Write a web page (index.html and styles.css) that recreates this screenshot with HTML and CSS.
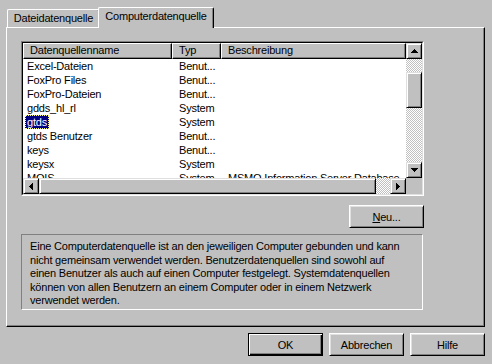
FILE: index.html
```html
<!DOCTYPE html>
<html lang="de">

<head>
  <meta charset="UTF-8">
  <meta name="viewport" content="width=device-width, initial-scale=1.0">
  <title>ODBC-Datenquellen</title>
  <link rel="stylesheet" href="styles.css">
</head>

<body>
  <div class="dialog">
    <div class="tabs">
      <div class="tab">Dateidatenquelle</div>
      <div class="tab tab-active">Computerdatenquelle</div>
    </div>

    <div class="panel">
      <div class="listview">
        <div class="listview-frame">
          <div class="list-body">
            <div class="list-header">
              <div class="col-head">Datenquellenname</div>
              <div class="col-head">Typ</div>
              <div class="col-head">Beschreibung</div>
            </div>
            <div class="row"><span class="name"><span class="label">Excel-Dateien</span></span><span class="typ">Benut...</span><span class="desc"></span></div>
            <div class="row"><span class="name"><span class="label">FoxPro Files</span></span><span class="typ">Benut...</span><span class="desc"></span></div>
            <div class="row"><span class="name"><span class="label">FoxPro-Dateien</span></span><span class="typ">Benut...</span><span class="desc"></span></div>
            <div class="row"><span class="name"><span class="label">gdds_hl_rl</span></span><span class="typ">System</span><span class="desc"></span></div>
            <div class="row"><span class="name"><span class="label selected">gtds</span></span><span class="typ">System</span><span class="desc"></span></div>
            <div class="row"><span class="name"><span class="label">gtds Benutzer</span></span><span class="typ">Benut...</span><span class="desc"></span></div>
            <div class="row"><span class="name"><span class="label">keys</span></span><span class="typ">Benut...</span><span class="desc"></span></div>
            <div class="row"><span class="name"><span class="label">keysx</span></span><span class="typ">System</span><span class="desc"></span></div>
            <div class="row"><span class="name"><span class="label">MQIS</span></span><span class="typ">System</span><span class="desc">MSMQ Information Server Database</span></div>
          </div>

          <div class="vscroll">
            <div class="sb-btn">
              <svg width="7" height="4" viewBox="0 0 7 4"><path d="M3 0h1v1h1v1h1v1h1v1H0V3h1V2h1V1h1z"/></svg>
            </div>
            <div class="sb-track sb-track-v">
              <div class="sb-thumb vthumb"></div>
            </div>
            <div class="sb-btn">
              <svg width="7" height="4" viewBox="0 0 7 4"><path d="M0 0h7v1h-1v1h-1v1h-1v1h-1v-1h-1v-1h-1v-1h-1z"/></svg>
            </div>
          </div>

          <div class="hscroll">
            <div class="sb-btn">
              <svg width="4" height="7" viewBox="0 0 4 7"><path d="M4 0v7h-1v-1h-1v-1h-1v-1h-1v-1h1v-1h1v-1h1v-1z"/></svg>
            </div>
            <div class="sb-thumb hthumb"></div>
            <div class="sb-track"></div>
            <div class="sb-btn">
              <svg width="4" height="7" viewBox="0 0 4 7"><path d="M0 0h1v1h1v1h1v1h1v1h-1v1h-1v1h-1v1h-1z"/></svg>
            </div>
          </div>

          <div class="sb-corner"></div>
        </div>
      </div>

      <div class="actions">
        <button class="btn"><u>N</u>eu...</button>
      </div>

      <div class="note">
        Eine Computerdatenquelle ist an den jeweiligen Computer gebunden und kann<br>
        nicht gemeinsam verwendet werden. Benutzerdatenquellen sind sowohl auf<br>
        einen Benutzer als auch auf einen Computer festgelegt. Systemdatenquellen<br>
        können von allen Benutzern an einem Computer oder in einem Netzwerk<br>
        verwendet werden.
      </div>
    </div>

    <div class="dialog-buttons">
      <button class="btn btn-default">OK</button>
      <button class="btn">Abbrechen</button>
      <button class="btn">Hilfe</button>
    </div>
  </div>
</body>

</html>
```

FILE: styles.css
```css
* {
  box-sizing: border-box;
}

body {
  margin: 0;
  background: #c0c0c0;
  font-family: "Liberation Sans", Arial, sans-serif;
  font-size: 11px;
  letter-spacing: -0.2px;
  color: #000;
}

.dialog {
  width: 492px;
  height: 364px;
  padding: 7px 0 0 6px;
}

/* tabs */

.tabs {
  display: flex;
  align-items: flex-end;
  height: 20px;
}

.tab {
  width: 93px;
  height: 18px;
  margin-left: 1px;
  border: 1px solid #fff;
  border-right-color: #000;
  border-bottom: none;
  border-radius: 2px 2px 0 0;
  box-shadow: inset -1px 0 #808080;
  text-align: center;
  line-height: 17px;
  white-space: nowrap;
}

.tab-active {
  position: relative;
  z-index: 1;
  width: 116px;
  height: 21px;
  margin-left: -2px;
  margin-bottom: -1px;
  background: #c0c0c0;
  line-height: 17px;
}

.panel {
  width: 479px;
  height: 300px;
  border: 1px solid;
  border-color: #fff #000 #000 #fff;
  box-shadow: inset -1px -1px #808080;
  padding: 13px 0 0 14px;
}

/* list view */

.listview {
  width: 403px;
  height: 155px;
  border: 1px solid;
  border-color: #808080 #fff #fff #808080;
}

.listview-frame {
  height: 100%;
  border: 1px solid;
  border-color: #000 #dfdfdf #dfdfdf #000;
  background: #fff;
  display: grid;
  grid-template-columns: 1fr 16px;
  grid-template-rows: 1fr 16px;
}

.list-body {
  overflow: hidden;
  white-space: nowrap;
}

.list-header {
  display: grid;
  grid-template-columns: 149px 49px 1fr;
  height: 16px;
  background: #c0c0c0;
}

.col-head {
  border: 1px solid;
  border-color: #fff #000 #000 #fff;
  box-shadow: inset -1px -1px #808080;
  padding-left: 6px;
  line-height: 13px;
}

.row {
  display: grid;
  grid-template-columns: 149px 49px 1fr;
  height: 14px;
  line-height: 15px;
}

.name {
  padding-left: 2px;
}

.label {
  display: inline-block;
  height: 14px;
  padding: 0 2px;
}

.selected {
  background: #000080;
  color: #fff;
  outline: 1px dotted #ffff80;
  outline-offset: -1px;
}

.typ,
.desc {
  padding-left: 7px;
}

/* scroll bars */

.vscroll {
  display: flex;
  flex-direction: column;
}

.hscroll {
  display: flex;
}

.sb-btn {
  width: 16px;
  height: 16px;
  flex: none;
  display: flex;
  align-items: center;
  justify-content: center;
  background: #c0c0c0;
  border: 1px solid;
  border-color: #dfdfdf #000 #000 #dfdfdf;
  box-shadow: inset 1px 1px #fff, inset -1px -1px #808080;
}

.sb-btn svg {
  display: block;
  shape-rendering: crispEdges;
}

.sb-track {
  flex: 1;
  background: repeating-conic-gradient(#c0c0c0 0 25%, #fff 0 50%) 0 0 / 2px 2px;
}

.sb-track-v {
  display: flex;
  flex-direction: column;
}

.sb-thumb {
  background: #c0c0c0;
  border: 1px solid;
  border-color: #dfdfdf #000 #000 #dfdfdf;
  box-shadow: inset 1px 1px #fff, inset -1px -1px #808080;
}

.vthumb {
  height: 36px;
  margin-top: 13px;
}

.hthumb {
  width: 337px;
  height: 16px;
}

.sb-corner {
  background: #c0c0c0;
}

/* buttons and text */

.btn {
  width: 75px;
  height: 23px;
  padding: 0;
  font: inherit;
  letter-spacing: inherit;
  color: #000;
  background: #c0c0c0;
  border: 1px solid;
  border-color: #fff #000 #000 #fff;
  box-shadow: inset 1px 1px #dfdfdf, inset -1px -1px #808080;
}

.btn-default {
  border-color: #000;
  box-shadow: inset 1px 1px #fff, inset -1px -1px #000, inset -2px -2px #808080;
}

.actions {
  display: flex;
  justify-content: flex-end;
  width: 403px;
  margin-top: 9px;
}

.note {
  width: 402px;
  height: 76px;
  margin-top: 6px;
  padding: 5px 8px 0;
  border: 1px solid;
  border-color: #808080 #fff #fff #808080;
  line-height: 13.5px;
  white-space: nowrap;
}

.dialog-buttons {
  display: flex;
  justify-content: flex-end;
  gap: 6px;
  width: 479px;
  margin-top: 6px;
}
```
